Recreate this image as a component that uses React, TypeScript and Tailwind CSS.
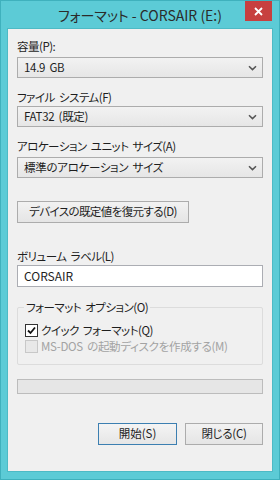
const jp = "font-['Meiryo_UI','Noto_Sans_CJK_JP',sans-serif] [font-feature-settings:'palt']";

function Chevron() {
  return (
    <svg width="9" height="6" viewBox="0 0 9 6" className="shrink-0">
      <path d="M1 1.2 L4.5 4.6 L8 1.2" fill="none" stroke="#555" strokeWidth="1.5" />
    </svg>
  );
}

function Select({ value }: { value: string }) {
  return (
    <div className="flex h-[21px] items-center justify-between border border-[#acacac] bg-gradient-to-b from-[#f2f2f2] to-[#e6e6e6] pl-[6px] pr-[5px]">
      <span className="text-[11.5px] leading-none tracking-[-0.3px] text-[#1e1e1e] [word-spacing:2px]">{value}</span>
      <Chevron />
    </div>
  );
}

function Label({ children, className = "" }: { children: React.ReactNode; className?: string }) {
  return (
    <div className={`text-[11.5px] leading-[16px] tracking-[-0.5px] text-[#1e1e1e] [word-spacing:2px] ${className}`}>
      {children}
    </div>
  );
}

export default function App() {
  return (
    <div className={`relative flex h-[480px] w-[280px] flex-col border border-[#3fb1bd] bg-[#5ccbd6] ${jp}`}>
      <div className="flex h-[27px] items-center justify-center">
        <span className="text-[14px] leading-none text-[#2b2b2b]">フォーマット - CORSAIR (E:)</span>
      </div>
      <div className="absolute right-[7px] top-0 flex h-[20px] w-[27px] items-center justify-center bg-[#c7403f]">
        <svg width="9" height="9" viewBox="0 0 9 9">
          <path d="M1 1 L8 8 M8 1 L1 8" stroke="#fff" strokeWidth="1.8" />
        </svg>
      </div>
      <div className="mx-[6px] flex h-[444px] flex-col border border-[#4dbac5] bg-[#f0f0f0] px-[9px] pt-[9px]">
        <Label>容量(P):</Label>
        <div className="mt-[3px]">
          <Select value="14.9 GB" />
        </div>
        <Label className="mt-[11px]">ファイル システム(F)</Label>
        <div className="mt-[1px]">
          <Select value="FAT32 (既定)" />
        </div>
        <Label className="mt-[11px]">アロケーション ユニット サイズ(A)</Label>
        <div className="mt-[3px]">
          <Select value="標準のアロケーション サイズ" />
        </div>
        <button className="mt-[23px] flex h-[22px] w-[172px] items-center justify-center border border-[#acacac] bg-gradient-to-b from-[#f2f2f2] to-[#e5e5e5] text-[11.5px] leading-none tracking-[-0.6px] text-[#1e1e1e]">
          デバイスの既定値を復元する(D)
        </button>
        <Label className="mt-[25px]">ボリューム ラベル(L)</Label>
        <div className="mt-[1px] flex h-[22px] items-center border border-[#abadb3] bg-white pl-[6px] text-[12px] leading-none text-[#1e1e1e]">
          CORSAIR
        </div>
        <div className="relative mt-[20px] h-[58px] rounded-[2px] border border-[#dcdcdc] pl-[7px] pt-[14px]">
          <span className="absolute -top-[9px] left-[6px] bg-[#f0f0f0] px-[2px] text-[11.5px] leading-[16px] tracking-[-0.5px] text-[#1e1e1e] [word-spacing:2px]">
            フォーマット オプション(O)
          </span>
          <div className="flex items-center gap-[3px]">
            <div className="flex h-[13px] w-[13px] items-center justify-center border border-[#333] bg-white">
              <svg width="9" height="9" viewBox="0 0 9 9">
                <path d="M1 4.5 L3.5 7 L8 1.5" fill="none" stroke="#111" strokeWidth="1.8" />
              </svg>
            </div>
            <span className="text-[11.5px] leading-[16px] tracking-[-0.5px] text-[#1e1e1e] [word-spacing:2px]">クイック フォーマット(Q)</span>
          </div>
          <div className="flex items-center gap-[3px]">
            <div className="h-[13px] w-[13px] border border-[#c8c8c8] bg-[#e8e8e8]" />
            <span className="text-[11.5px] leading-[16px] tracking-[-0.3px] text-[#a3a3a3] [word-spacing:2px]">MS-DOS の起動ディスクを作成する(M)</span>
          </div>
        </div>
        <div className="mt-[14px] h-[15px] border border-[#bcbcbc] bg-[#e6e6e6]" />
        <div className="mt-[29px] flex justify-end gap-[8px]">
          <button className="flex h-[22px] w-[79px] items-center justify-center border border-[#3c7fb1] bg-gradient-to-b from-[#f4f4f4] to-[#e6e6e6] text-[11.5px] leading-none text-[#1e1e1e]">
            開始(S)
          </button>
          <button className="flex h-[22px] w-[78px] items-center justify-center border border-[#acacac] bg-gradient-to-b from-[#f2f2f2] to-[#e5e5e5] text-[11.5px] leading-none tracking-[-0.3px] text-[#1e1e1e]">
            閉じる(C)
          </button>
        </div>
      </div>
    </div>
  );
}
